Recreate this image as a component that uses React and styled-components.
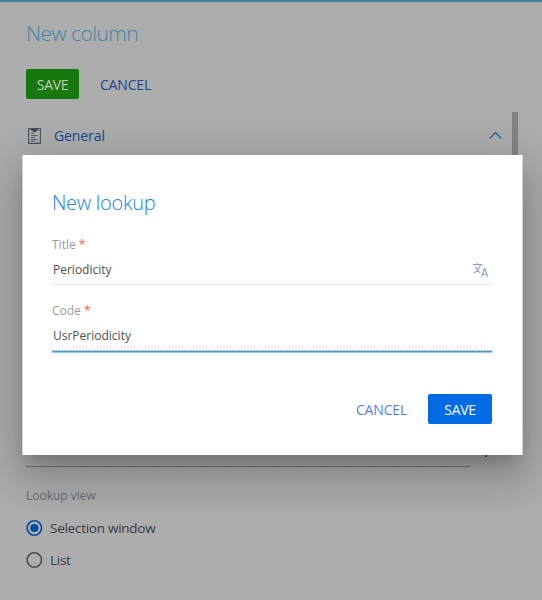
import React from "react";
import styled, { createGlobalStyle } from "styled-components";

const GlobalStyle = createGlobalStyle`
  * { box-sizing: border-box; }
  body { margin: 0; background: #adadad; font-family: "Open Sans", "Noto Sans", sans-serif; overflow: hidden; }
`;

const Page = styled.main`
  position: relative;
  display: flex;
  flex-direction: column;
  width: 542px;
  height: 600px;
  padding: 0 19px 0 26px;
  overflow: hidden;
  background: #adadad;
  border-top: 2px solid #43809b;
`;

const PageTitle = styled.h1`
  margin: 15px 0 0;
  height: 33px;
  font-size: 21px;
  line-height: 32px;
  font-weight: 300;
  letter-spacing: -0.55px;
  color: #4784a2;
`;

const Toolbar = styled.div`
  display: flex;
  gap: 12px;
  margin-top: 19px;
`;

const Button = styled.button`
  width: ${(p) => p.$width};
  height: 30px;
  padding: 1px 0 0;
  border: 0;
  border-radius: 2px;
  background: ${(p) => p.$bg || "transparent"};
  color: ${(p) => p.$color};
  font: 400 14px/28px "Open Sans", sans-serif;
  letter-spacing: ${(p) => p.$spacing || "-0.35px"};
`;

const ScrollArea = styled.div`
  display: flex;
  justify-content: space-between;
  height: 355px;
  margin-top: 13px;
`;

const Section = styled.section`
  display: flex;
  flex-direction: column;
  justify-content: space-between;
  width: 477px;
`;

const SectionHeader = styled.header`
  display: flex;
  align-items: center;
  height: 48px;
`;

const SectionTitle = styled.h2`
  flex: 1;
  margin: 0 0 0 13px;
  font-size: 14px;
  line-height: 20px;
  font-weight: 400;
  letter-spacing: -0.1px;
  color: #18468f;
`;

const ScrollThumb = styled.div`
  width: 6px;
  height: 330px;
  margin-right: 5px;
  background: #838383;
`;

const DashedLine = styled.div`
  flex: none;
  height: 1px;
  background: repeating-linear-gradient(90deg, ${(p) => p.$color} 0 2px, ${(p) => p.$gap || "transparent"} 2px 3px);
`;

const FieldEnd = styled.div`
  display: flex;
  flex-direction: column;
  width: 444px;
`;

const AddMark = styled.div`
  align-self: flex-end;
  width: 2px;
  height: 17px;
  margin: 0 -17px 9px 0;
  background: #4d535c;
`;

const RadioGroup = styled.div`
  display: flex;
  flex-direction: column;
  margin-top: 19px;
`;

const RadioCaption = styled.div`
  height: 20px;
  font-size: 12px;
  line-height: 20px;
  color: #6c6c6c;
`;

const RadioOption = styled.div`
  display: flex;
  align-items: center;
  gap: 7px;
  height: 32px;
  font-size: 13.5px;
  line-height: 30px;
  letter-spacing: -0.26px;
  color: #393b3f;
`;

const RadioList = styled.div`
  margin-top: 6px;
`;

const Dialog = styled.section`
  position: absolute;
  left: 22px;
  top: 153px;
  display: flex;
  flex-direction: column;
  width: 501px;
  height: 300px;
  padding: 32px 30px 31px 29px;
  background: #fff;
  border: 0 solid #d2d2d2;
  border-width: 0 1px;
  box-shadow:
    0 11px 15px -7px rgba(0, 0, 0, 0.2),
    0 24px 38px 3px rgba(0, 0, 0, 0.14),
    0 9px 46px 8px rgba(0, 0, 0, 0.12);
`;

const DialogTitle = styled.h2`
  margin: 0 0 18px;
  height: 30px;
  font-size: 20px;
  line-height: 31px;
  font-weight: 300;
  letter-spacing: -0.3px;
  color: #237fe0;
`;

const Field = styled.div`
  display: flex;
  flex-direction: column;
  height: 66px;
`;

const Label = styled.label`
  height: 20px;
  font-size: 12px;
  line-height: 20px;
  color: #999;
`;

const Required = styled.span`
  color: #f7594a;
`;

const InputLine = styled.div`
  display: flex;
  align-items: center;
  justify-content: space-between;
  height: 29px;
  padding: 0 3px 0 1px;
  font-size: 12px;
  color: #505050;
`;

const FocusLine = styled.div`
  height: 2px;
  flex: none;
  background: linear-gradient(#469ed0 50%, #91caea 50%);
`;

const DialogActions = styled.footer`
  display: flex;
  justify-content: flex-end;
  gap: 12px;
  margin-top: auto;
`;

const Icon = styled.svg`
  display: block;
  flex: none;
`;

function ClipboardIcon() {
  return (
    <Icon width="15" height="18" viewBox="0 0 15 18" fill="none" stroke="#4c5363">
      <path d="M2.6 1.6h11.8v14.8H2.6z" strokeWidth="1.2" />
      <path d="M5 1.6h7v1.6L8.5 5.5 5 3.2z" fill="#3d4454" stroke="none" />
      <path d="M5 6.5h3M5 8.5h6.5M5 10.5h4M5 12.5h6.5M5 14h4" strokeWidth=".9" />
    </Icon>
  );
}

function RadioIcon({ selected }) {
  return (
    <Icon width="17" height="16" viewBox="0 0 17 16" fill="none">
      <circle cx="8.3" cy="8" r="7.2" stroke={selected ? "#004b9f" : "#505050"} strokeWidth="1.6" />
      {selected && <circle cx="8.3" cy="8" r="4.1" fill="#004b9f" />}
    </Icon>
  );
}

function TranslateIcon() {
  return (
    <Icon width="17" height="16" viewBox="0 0 17 16" fill="none" stroke="#8d9fc1" strokeWidth="1.1">
      <path d="M.8 2.5h9.8M5.5 1v1.5M8.5 2.7C7.7 6 5.3 9.2 2.1 11.4M3.4 4.8c1 2.8 2.7 4.6 4.9 5.9" />
      <path d="M9.6 14.7l2.9-8.2h.3l2.9 8.2M10.6 12.2h4.2" />
    </Icon>
  );
}

export default function App() {
  return (
    <>
      <GlobalStyle />
      <Page>
        <PageTitle>New column</PageTitle>
        <Toolbar>
          <Button $width="53px" $bg="#17780e" $color="#c0ccba">SAVE</Button>
          <Button $width="69px" $color="#194891" $spacing="-0.15px">CANCEL</Button>
        </Toolbar>
        <ScrollArea>
          <Section>
            <SectionHeader>
              <ClipboardIcon />
              <SectionTitle>General</SectionTitle>
              <Icon width="14" height="17" viewBox="0 0 14 17" fill="none">
                <path d="M.8 10.4 6.5 4.7l5.7 5.7" stroke="#1c57a0" strokeWidth="1.2" />
              </Icon>
            </SectionHeader>
            <FieldEnd>
              <AddMark />
              <DashedLine $color="#717171" $gap="#808080" />
            </FieldEnd>
          </Section>
          <ScrollThumb />
        </ScrollArea>
        <RadioGroup>
          <RadioCaption>Lookup view</RadioCaption>
          <RadioList>
            <RadioOption><RadioIcon selected />Selection window</RadioOption>
            <RadioOption><RadioIcon />List</RadioOption>
          </RadioList>
        </RadioGroup>
        <Dialog role="dialog">
          <DialogTitle>New lookup</DialogTitle>
          <Field>
            <Label>Title <Required>*</Required></Label>
            <InputLine>Periodicity<TranslateIcon /></InputLine>
            <DashedLine $color="#dedede" />
          </Field>
          <Field>
            <Label>Code <Required>*</Required></Label>
            <InputLine>UsrPeriodicity</InputLine>
            <DashedLine $color="#b4b4b4" />
            <FocusLine />
          </Field>
          <DialogActions>
            <Button $width="69px" $color="#5b82d4" $spacing="-0.15px">CANCEL</Button>
            <Button $width="64px" $bg="#006be5" $color="#fff">SAVE</Button>
          </DialogActions>
        </Dialog>
      </Page>
    </>
  );
}
